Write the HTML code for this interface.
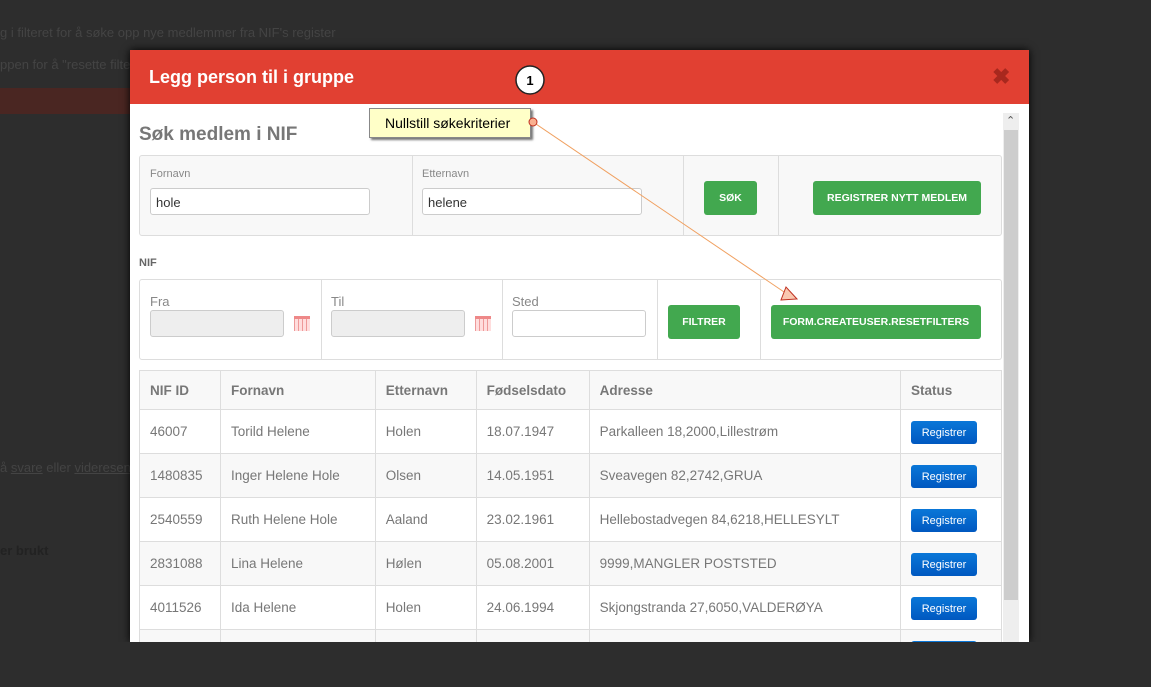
<!DOCTYPE html>
<html><head><meta charset="utf-8"><style>
*{box-sizing:border-box;margin:0;padding:0}
body{width:1151px;height:687px;background:#2d2d2d;position:relative;overflow:hidden;font-family:"Liberation Sans",sans-serif;color:#555}
.a{position:absolute}
.bgt{color:#444;font-size:13px}
.panel{position:absolute;background:#f8f8f8;border:1px solid #ddd;border-radius:3px}
.lbl{position:absolute;font-size:11px;color:#888}
.inp{position:absolute;background:#fff;border:1px solid #ccc;border-radius:3px;height:27px;font-size:13px;color:#333;padding:6px 5px}
.btn{position:absolute;background:#42a84f;color:#fff;font-weight:bold;font-size:10.5px;border-radius:3px;display:flex;align-items:center;justify-content:center}
.vl{position:absolute;top:0;bottom:0;width:1px;background:#ddd}
table{position:absolute;left:139px;top:370px;width:863px;border-collapse:collapse;font-size:13.5px;color:#777}
td,th{border:1px solid #ddd;padding:0 10px;text-align:left;height:44px}
th{height:39px;background:#f8f8f8;color:#777;font-size:13.5px}
tr:nth-child(odd) td{background:#f8f8f8}
tr:nth-child(even) td{background:#fff}
.reg{display:inline-block;background:linear-gradient(#0a77d8,#0058c0);color:#fff;font-size:11px;border-radius:3px;width:66px;height:23px;line-height:24px;text-align:center;vertical-align:middle;margin-top:2px}
.cal{position:absolute;width:16px;height:15px;background:repeating-linear-gradient(90deg,#e99 0 1px,#fdd 1px 4px),#fdd;border-top:3px solid #e88}
</style></head><body>
<div class="a bgt" style="left:0;top:25px">g i filteret for å søke opp nye medlemmer fra NIF's register</div>
<div class="a bgt" style="left:0;top:57px">ppen for å "resette filte</div>
<div class="a" style="left:0;top:88px;width:130px;height:26px;background:#4a2622"></div>
<div class="a bgt" style="left:0;top:460px">å <u>svare</u> eller <u>videresend</u></div>
<div class="a bgt" style="left:0;top:543px;font-weight:bold;color:#222">er brukt</div>

<div class="a" style="left:130px;top:50px;width:899px;height:592px;background:#fff;overflow:hidden;box-shadow:0 0 8px #000">
 <div class="a" style="left:0;top:0;width:899px;height:54px;background:#e14032"></div>
 <div class="a" style="left:19px;top:17px;color:#fff;font-weight:bold;font-size:18px">Legg person til i gruppe</div>
 <div class="a" style="left:862px;top:14px;color:#a8281e;font-weight:bold;font-size:22px">✖</div>
 <div class="a" style="left:873px;top:63px;width:16px;height:529px;background:#eee"></div>
 <div class="a" style="left:874px;top:80px;width:14px;height:470px;background:#cdcdcd"></div>
 <div class="a" style="left:876px;top:64px;font-size:11px;color:#555">⌃</div>
</div>
<div class="a" style="left:139px;top:124px;font-size:19px;font-weight:bold;color:#777">Søk medlem i NIF</div>

<div class="panel" style="left:139px;top:155px;width:863px;height:81px">
 <div class="vl" style="left:272px"></div><div class="vl" style="left:543px"></div><div class="vl" style="left:638px"></div>
</div>
<div class="lbl" style="left:150px;top:168px">Fornavn</div>
<div class="inp" style="left:150px;top:188px;width:220px">hole</div>
<div class="lbl" style="left:422px;top:168px">Etternavn</div>
<div class="inp" style="left:422px;top:188px;width:220px">helene</div>
<div class="btn" style="left:704px;top:181px;width:53px;height:34px">SØK</div>
<div class="btn" style="left:813px;top:181px;width:168px;height:34px">REGISTRER NYTT MEDLEM</div>

<div class="a" style="left:139px;top:257px;font-size:11px;font-weight:bold;color:#666">NIF</div>
<div class="panel" style="left:139px;top:279px;width:863px;height:81px;background:#fff">
 <div class="vl" style="left:181px"></div><div class="vl" style="left:362px"></div><div class="vl" style="left:517px"></div><div class="vl" style="left:620px"></div>
</div>
<div class="lbl" style="left:150px;top:294px;font-size:13px">Fra</div>
<div class="inp" style="left:150px;top:310px;width:134px;background:#eee"></div>
<div class="cal" style="left:294px;top:316px"></div>
<div class="lbl" style="left:331px;top:294px;font-size:13px">Til</div>
<div class="inp" style="left:331px;top:310px;width:134px;background:#eee"></div>
<div class="cal" style="left:475px;top:316px"></div>
<div class="lbl" style="left:512px;top:294px;font-size:13px">Sted</div>
<div class="inp" style="left:512px;top:310px;width:134px"></div>
<div class="btn" style="left:668px;top:305px;width:72px;height:34px">FILTRER</div>
<div class="btn" style="left:771px;top:305px;width:210px;height:34px">FORM.CREATEUSER.RESETFILTERS</div>

<table>
<colgroup><col style="width:81px"><col style="width:155px"><col style="width:101px"><col style="width:113px"><col style="width:312px"><col style="width:101px"></colgroup>
<tr><th>NIF ID</th><th>Fornavn</th><th>Etternavn</th><th>Fødselsdato</th><th>Adresse</th><th>Status</th></tr>
<tr><td>46007</td><td>Torild Helene</td><td>Holen</td><td>18.07.1947</td><td>Parkalleen 18,2000,Lillestrøm</td><td><span class="reg">Registrer</span></td></tr>
<tr><td>1480835</td><td>Inger Helene Hole</td><td>Olsen</td><td>14.05.1951</td><td>Sveavegen 82,2742,GRUA</td><td><span class="reg">Registrer</span></td></tr>
<tr><td>2540559</td><td>Ruth Helene Hole</td><td>Aaland</td><td>23.02.1961</td><td>Hellebostadvegen 84,6218,HELLESYLT</td><td><span class="reg">Registrer</span></td></tr>
<tr><td>2831088</td><td>Lina Helene</td><td>Hølen</td><td>05.08.2001</td><td>9999,MANGLER POSTSTED</td><td><span class="reg">Registrer</span></td></tr>
<tr><td>4011526</td><td>Ida Helene</td><td>Holen</td><td>24.06.1994</td><td>Skjongstranda 27,6050,VALDERØYA</td><td><span class="reg">Registrer</span></td></tr>
<tr><td></td><td></td><td></td><td></td><td></td><td><span class="reg">Registrer</span></td></tr>
</table>
<div class="a" style="left:0;top:642px;width:1151px;height:45px;background:#2d2d2d"></div>

<svg class="a" style="left:0;top:0" width="1151" height="687">
 <line x1="533" y1="122" x2="790" y2="296" stroke="#f0a060" stroke-width="1"/>
 <polygon points="781,300 797,299 786,287" fill="#f9c8b0" stroke="#c03020"/>
 <circle cx="530" cy="80" r="14" fill="#fff" stroke="#222" stroke-width="1.5"/>
 <text x="530" y="85" font-size="13" font-weight="bold" text-anchor="middle" font-family="Liberation Sans">1</text>
</svg>
<div class="a" style="left:369px;top:108px;width:162px;height:30px;background:#ffffc8;border:1px solid #888;box-shadow:2px 2px 2px #777;font-size:14px;color:#000;padding:6px 0 0 15px">Nullstill søkekriterier</div>
<svg class="a" style="left:526px;top:115px" width="14" height="14"><circle cx="7" cy="7" r="4" fill="#f9b090" stroke="#c03020"/></svg>
</body></html>
